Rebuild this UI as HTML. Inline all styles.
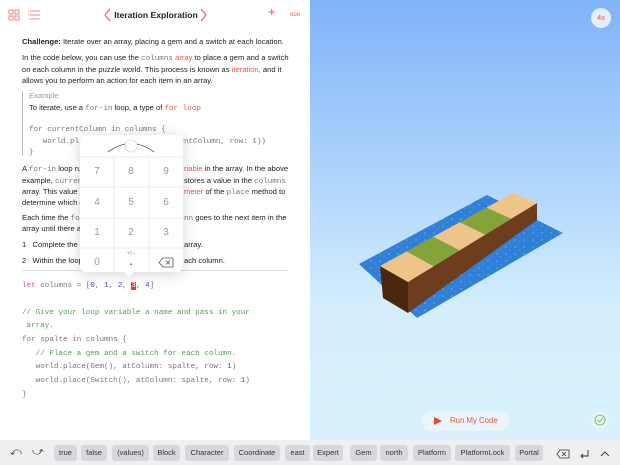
<!DOCTYPE html>
<html><head><meta charset="utf-8"><style>
*{margin:0;padding:0;box-sizing:border-box}
body{width:620px;height:465px;overflow:hidden;position:relative;font-family:"Liberation Sans",sans-serif;background:#fff}
.t{position:absolute;font-size:7.6px;color:#222;white-space:nowrap;line-height:10px}
.m{font-family:"Liberation Mono",monospace;font-size:7.6px;color:#777}
.r{color:#e4564a}
.k{position:absolute;font-size:10px;color:#999;width:34px;text-align:center}
.chip{position:absolute;top:445px;height:16px;background:#d6d8db;border-radius:3px;font-size:7.5px;color:#333;text-align:center;line-height:16px}
</style></head><body>
<div style="position:absolute;left:0;top:0;width:310px;height:440px;background:#fff"></div>
<div style="position:absolute;left:310px;top:0;width:310px;height:440px;background:linear-gradient(#80b3f8 0%,#a9d0fb 35%,#d4eefc 70%,#d8f2fd 100%)"></div>
<!-- top bar -->
<svg style="position:absolute;left:8px;top:9px" width="36" height="12"><g fill="none" stroke="#e88" stroke-width="1"><rect x="1" y="1" width="4" height="4"/><rect x="7" y="1" width="4" height="4"/><rect x="1" y="7" width="4" height="4"/><rect x="7" y="7" width="4" height="4"/><path d="M22 2h10M22 6h10M22 10h10M20 2h1M20 6h1M20 10h1"/></g></svg>
<svg style="position:absolute;left:104px;top:8px" width="104" height="14"><path d="M6 1L1 7L6 13" fill="none" stroke="#e4564a" stroke-width="1"/><path d="M97 1L102 7L97 13" fill="none" stroke="#e4564a" stroke-width="1"/></svg>
<div class="t" style="left:110px;top:10px;width:92px;text-align:center;font-size:8.6px;font-weight:bold">Iteration Exploration</div>
<div class="t r" style="left:268px;top:7px;font-size:13px">+</div>
<div class="t r" style="left:290px;top:10px;font-size:6px">ooo</div>
<!-- text -->
<div class="t" style="left:22px;top:37px"><b>Challenge:</b> Iterate over an array, placing a gem and a switch at each location.</div>
<div class="t" style="left:22px;top:53px">In the code below, you can use the <span class="m">columns</span> <span class="r">array</span> to place a gem and a switch</div>
<div class="t" style="left:22px;top:65px">on each column in the puzzle world. This process is known as <span class="r">iteration</span>, and it</div>
<div class="t" style="left:22px;top:76px">allows you to perform an action for each item in an array.</div>
<div style="position:absolute;left:22px;top:91px;width:1px;height:65px;background:#bbb"></div>
<div class="t" style="left:29px;top:91px;color:#999">Example</div>
<div class="t" style="left:29px;top:103px">To iterate, use a <span class="m">for-in</span> loop, a type of <span class="m r">for loop</span></div>
<div class="t m" style="left:29px;top:125px">for currentColumn in columns {</div>
<div class="t m" style="left:29px;top:137px">&nbsp;&nbsp;&nbsp;world.pl&nbsp;&nbsp;&nbsp;&nbsp;&nbsp;&nbsp;&nbsp;&nbsp;&nbsp;&nbsp;&nbsp;&nbsp;&nbsp;&nbsp;&nbsp;&nbsp;&nbsp;&nbsp;&nbsp;&nbsp;rrentColumn, row: 1))</div>
<div class="t m" style="left:29px;top:148px">}</div>
<div class="t" style="left:22px;top:164px">A <span class="m">for-in</span> loop ru</div>
<div class="t" style="left:184px;top:164px"><span class="r">riable</span> in the array. In the above</div>
<div class="t" style="left:22px;top:176px">example, <span class="m">curren</span></div>
<div class="t" style="left:184px;top:176px">stores a value in the <span class="m">columns</span></div>
<div class="t" style="left:22px;top:187px">array. This value i</div>
<div class="t" style="left:184px;top:187px"><span class="r">meter</span> of the <span class="m">place</span> method to</div>
<div class="t" style="left:22px;top:198px">determine which c</div>
<div class="t" style="left:22px;top:213px">Each time the <span class="m">fo</span></div>
<div class="t" style="left:184px;top:213px"><span class="m">nn</span> goes to the next item in the</div>
<div class="t" style="left:22px;top:224px">array until there a</div>
<div class="t" style="left:22px;top:240px">1&nbsp;&nbsp;&nbsp;Complete the</div>
<div class="t" style="left:184px;top:240px">array.</div>
<div class="t" style="left:22px;top:256px">2&nbsp;&nbsp;&nbsp;Within the loop</div>
<div class="t" style="left:184px;top:256px">ach column.</div>
<div style="position:absolute;left:22px;top:270px;width:266px;height:1px;background:#ddd"></div>
<!-- code -->
<div class="t m" style="left:22px;top:281px"><span style="color:#b05ea0">let</span> columns = [<span style="color:#4a4aa8">0</span>, <span style="color:#4a4aa8">1</span>, <span style="color:#4a4aa8">2</span>, <span style="background:#e03d2a;color:#fff">3</span>, <span style="color:#4a4aa8">4</span>]</div>
<div class="t m" style="left:22px;top:308px;color:#5a9a5a">// Give your loop variable a name and pass in your</div>
<div class="t m" style="left:22px;top:321px;color:#5a9a5a">&nbsp;array.</div>
<div class="t m" style="left:22px;top:335px"><span style="color:#b05ea0">for</span> spalte <span style="color:#b05ea0">in</span> columns {</div>
<div class="t m" style="left:22px;top:349px;color:#5a9a5a">&nbsp;&nbsp;&nbsp;// Place a gem and a switch for each column.</div>
<div class="t m" style="left:22px;top:362px">&nbsp;&nbsp;&nbsp;world.place(Gem(), atColumn: spalte, row: <span style="color:#4a4aa8">1</span>)</div>
<div class="t m" style="left:22px;top:376px">&nbsp;&nbsp;&nbsp;world.place(Switch(), atColumn: spalte, row: <span style="color:#4a4aa8">1</span>)</div>
<div class="t m" style="left:22px;top:390px">}</div>
<!-- keypad -->
<div style="position:absolute;left:80px;top:135px;width:103px;height:137px;background:#fff;border-radius:6px;box-shadow:0 2px 14px rgba(0,0,0,.18)"></div>
<svg style="position:absolute;left:80px;top:135px" width="103" height="142"><path d="M28 17 Q51 0 74 17" fill="none" stroke="#555" stroke-width=".8"/><circle cx="51" cy="11" r="6" fill="#fff" stroke="#ccc" stroke-width=".6"/><g stroke="#e6e6e6" stroke-width=".8"><path d="M0 22H103M0 52H103M0 83H103M0 113H103M34 22V137M69 22V137"/></g><path d="M44 137 L49 142 L54 137Z" fill="#fff"/></svg>
<div class="k" style="left:80px;top:166px">7</div><div class="k" style="left:114px;top:166px">8</div><div class="k" style="left:149px;top:166px">9</div>
<div class="k" style="left:80px;top:197px">4</div><div class="k" style="left:114px;top:197px">5</div><div class="k" style="left:149px;top:197px">6</div>
<div class="k" style="left:80px;top:227px">1</div><div class="k" style="left:114px;top:227px">2</div><div class="k" style="left:149px;top:227px">3</div>
<div class="k" style="left:80px;top:257px">0</div><div class="k" style="left:114px;top:251px;font-size:6px">+/−<br><b style="color:#333;font-size:9px">.</b></div>
<svg style="position:absolute;left:158px;top:257px" width="16" height="11"><path d="M5 1H15V10H5L1 5.5Z M8 3.5l4 4M12 3.5l-4 4" fill="none" stroke="#555" stroke-width=".8"/></svg>
<!-- 3D scene -->
<svg style="position:absolute;left:310px;top:0" width="310" height="440" viewBox="310 0 310 440">
<defs><pattern id="w" width="9" height="7" patternUnits="userSpaceOnUse"><rect width="9" height="7" fill="#2f80d6"/><circle cx="2" cy="2" r=".5" fill="#bfe"/><circle cx="6" cy="5" r=".4" fill="#9ce"/></pattern></defs>
<polygon points="359,264 487,195 563,233 417,318" fill="url(#w)"/>
<polygon points="380,266 408,282 408,313 383,298" fill="#4a2810"/>
<polygon points="408,282 537,203 537,220 408,313" fill="#6d3d1d"/>
<polygon points="380,266 406.6,251.4 433.8,266.2 408,282" fill="#efc48a"/>
<polygon points="406.6,251.4 433.2,236.8 459.6,250.4 433.8,266.2" fill="#84a43a"/>
<polygon points="433.2,236.8 459.8,222.2 485.4,234.6 459.6,250.4" fill="#efc48a"/>
<polygon points="459.8,222.2 486.4,207.6 511.2,218.8 485.4,234.6" fill="#84a43a"/>
<polygon points="486.4,207.6 513,193 537,203 511.2,218.8" fill="#efc48a"/>
</svg>
<div style="position:absolute;left:591px;top:8px;width:20px;height:20px;border-radius:50%;background:#e3eef9;color:#e4564a;font-size:7.5px;text-align:center;line-height:20px">4x</div>
<div style="position:absolute;left:422px;top:411px;width:87px;height:20px;border-radius:10px;background:#eaf5fb"></div>
<svg style="position:absolute;left:433px;top:416px" width="10" height="10"><path d="M1 1L9 5L1 9Z" fill="#e8442f"/></svg>
<div class="t r" style="left:450px;top:416px;font-size:7.8px">Run My Code</div>
<div style="position:absolute;left:591px;top:411px;width:18px;height:18px;border-radius:50%;background:#e6f4f4"></div>
<svg style="position:absolute;left:594px;top:414px" width="12" height="12"><circle cx="6" cy="6" r="5" fill="none" stroke="#5cb85c" stroke-width=".8"/><path d="M3.5 6l2 2 3-4" fill="none" stroke="#5cb85c" stroke-width=".8"/></svg>
<!-- bottom bar -->
<div style="position:absolute;left:0;top:440px;width:620px;height:25px;background:#eeeff1"></div>
<div class="t" style="left:10px;top:447px;font-size:11px;color:#333">⤺</div>
<div class="t" style="left:32px;top:447px;font-size:11px;color:#333">⤻</div>
<div class="chip" style="left:54px;width:23px">true</div>
<div class="chip" style="left:81px;width:26px">false</div>
<div class="chip" style="left:112px;width:37px">(values)</div>
<div class="chip" style="left:153px;width:27px">Block</div>
<div class="chip" style="left:185px;width:44px">Character</div>
<div class="chip" style="left:234px;width:46px">Coordinate</div>
<div class="chip" style="left:285px;width:25px">east</div>
<div class="chip" style="left:313px;width:30px">Expert</div>
<div class="chip" style="left:350px;width:27px">Gem</div>
<div class="chip" style="left:380px;width:28px">north</div>
<div class="chip" style="left:413px;width:38px">Platform</div>
<div class="chip" style="left:455px;width:55px">PlatformLock</div>
<div class="chip" style="left:515px;width:28px">Portal</div>
<svg style="position:absolute;left:556px;top:448px" width="60" height="12"><path d="M4 2H13V10H4L1 6Z M6 4l4 4M10 4l-4 4" fill="none" stroke="#333" stroke-width=".8"/><path d="M32 2V8H25M27 6L25 8L27 10" fill="none" stroke="#333" stroke-width=".9"/><path d="M45 8L49 4L53 8" fill="none" stroke="#333" stroke-width=".9"/></svg>
</body></html>
